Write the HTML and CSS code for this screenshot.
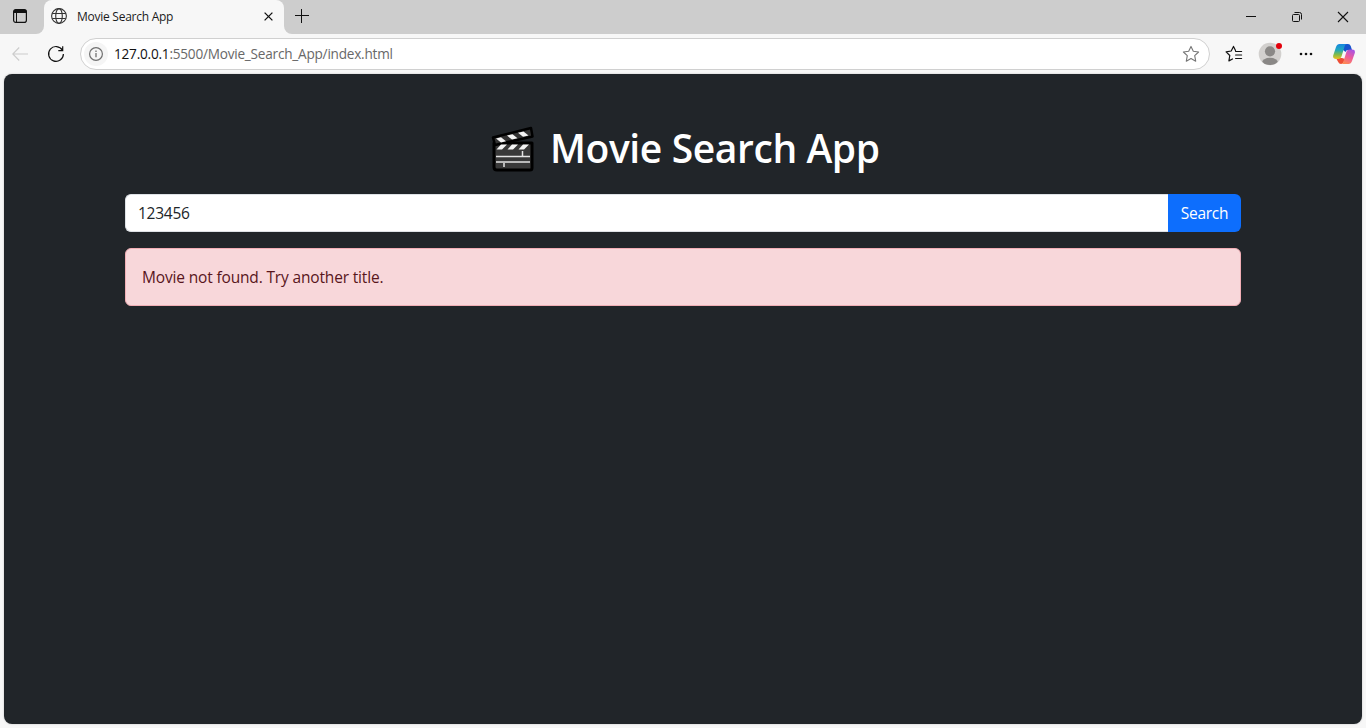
FILE: index.html
```html
<!DOCTYPE html>
<html lang="en">
<head>
<meta charset="utf-8">
<title>Movie Search App</title>
<link rel="stylesheet" href="styles.css">
</head>
<body>
<div class="browser">
  <header class="tabbar">
    <div class="tab-actions">
      <svg width="16" height="16" viewBox="0 0 16 16"><rect x="1.6" y="1.6" width="12.8" height="12.8" rx="2.2" fill="none" stroke="#111" stroke-width="1.2"/><path d="M1.5 5V3.7a2.2 2.2 0 0 1 2.2-2.2h8.6a2.2 2.2 0 0 1 2.2 2.2V5z" fill="#111"/><path d="M4.5 5v9.5" stroke="#111"/></svg>
    </div>
    <div class="tab">
      <svg class="globe" width="16" height="16" viewBox="0 0 16 16" fill="none" stroke="#333" stroke-width="1.1"><circle cx="8" cy="8" r="7.4"/><ellipse cx="8" cy="8" rx="3.3" ry="7.4"/><path d="M1.3 5.5h13.4M1.3 10.5h13.4"/></svg>
      <span class="tab-title">Movie Search App</span>
      <svg class="tab-close" width="9" height="9" viewBox="0 0 9 9"><path d="M.6.6l7.8 7.8M8.4.6L.6 8.4" stroke="#111" stroke-width="1.3"/></svg>
    </div>
    <svg class="new-tab" width="14" height="14" viewBox="0 0 14 14"><path d="M6.500 0v14M0 6.500h14" stroke="#111"/></svg>
    <div class="window-controls">
      <svg width="46" height="34" viewBox="0 0 46 34"><path d="M18 16.5h10" stroke="#111"/></svg>
      <svg width="46" height="34" viewBox="0 0 46 34" fill="none" stroke="#111"><rect x="18.5" y="14.5" width="7" height="7" rx="1"/><path d="M20.5 12.5h5a2 2 0 0 1 2 2v5"/></svg>
      <svg width="46" height="34" viewBox="0 0 46 34"><path d="M18 12l10 10M28 12L18 22" stroke="#111" stroke-width="1.1"/></svg>
    </div>
  </header>
  <div class="toolbar">
    <svg class="back" width="16" height="14" viewBox="0 0 16 14" fill="none" stroke="#ccc" stroke-width="1.1"><path d="M7.2.5L.8 7l6.4 6.5M.8 7H16"/></svg>
    <svg class="reload" width="18" height="18" viewBox="0 0 18 18" fill="none" stroke="#111" stroke-width="1.2"><path d="M15.4 5.2A7.4 7.4 0 1 0 16.4 9M15.7 1.2v4.400h-4.400"/></svg>
    <div class="address">
      <span class="site-info"><svg width="14" height="14" viewBox="0 0 14 14" fill="none" stroke="#707070"><circle cx="7" cy="7" r="6.4" stroke-width="1.2"/><path d="M7 6v4.3M7 3.5v1.4" stroke-width="1.3"/></svg></span>
      <span class="url"><span class="host">127.0.0.1</span>:5500/Movie_Search_App/index.html</span>
      <svg class="favorite" width="18" height="18" viewBox="0 0 18 18" fill="none" stroke="#767676" stroke-width="1.1" stroke-linejoin="round"><path d="M9 1.4l2.3 4.9 5.3.7-3.9 3.7 1 5.5L9 13.6l-4.7 2.6 1-5.5L1.4 7l5.3-.7z"/></svg>
    </div>
    <svg class="favorites" width="18" height="18" viewBox="0 0 18 18" fill="none" stroke="#111" stroke-width="1.2" stroke-linejoin="round" stroke-linecap="round"><path d="M10.500 5.500L8.500 1.400 6.200 6l-5.100.8 3.700 3.700-.9 5.400L7.500 14M10.600 6.500h6M10.600 10h6M10.600 13.500h6"/></svg>
    <svg class="profile" width="26" height="26" viewBox="0 0 26 26"><defs><clipPath id="face"><circle cx="12" cy="14" r="11"/></clipPath></defs><circle cx="12" cy="14" r="11.3" fill="#d2d0ce"/><g clip-path="url(#face)" fill="#8a8886"><circle cx="12" cy="11.3" r="5.1"/><ellipse cx="12" cy="22.5" rx="8" ry="4.7"/></g><circle cx="21" cy="6" r="3" fill="#e3000b"/></svg>
    <svg class="more" width="14" height="4" viewBox="0 0 14 4" fill="#111"><circle cx="2" cy="2" r="1.3"/><circle cx="7" cy="2" r="1.3"/><circle cx="12" cy="2" r="1.3"/></svg>
    <svg class="copilot" width="22" height="20" viewBox="0 0 22 20">
      <defs>
        <linearGradient id="cool" x1="0" y1="0" x2="0" y2="1"><stop offset="0" stop-color="#1686e0"/><stop offset=".4" stop-color="#20a8bd"/><stop offset=".7" stop-color="#80bb4b"/><stop offset="1" stop-color="#edc020"/></linearGradient>
        <linearGradient id="warm" x1=".8" y1="0" x2=".3" y2="1"><stop offset="0" stop-color="#a653e6"/><stop offset=".5" stop-color="#ed5b9b"/><stop offset="1" stop-color="#ff8b52"/></linearGradient>
      </defs>
      <path d="M11 0h4q2 0 2.700 2l1.300 4h-4q-2 0-2.500 2L9 5z" fill="#1754ce"/>
      <path d="M3 14h6l3 1q-1.700 5-4 5-2 0-2.800-2z" fill="#ed4e35"/>
      <path d="M6.5 0H14q-1.700 0-2.300 2L8.500 12.500Q7.800 15 5 15H3q-3.500 0-2.800-3.500L3 3q1-3 3.500-3z" fill="url(#cool)"/>
      <path d="M15.5 20H8q1.700 0 2.300-2l3.200-10.500Q14.200 5.500 17 5.500h2q3.500 0 2.800 3.500L19 17q-1 3-3.500 3z" fill="url(#warm)"/>
    </svg>
  </div>
  <main class="page">
    <div class="container">
      <h1 class="heading">
        <svg class="clapper" width="44" height="46" viewBox="0 0 44 46">
          <path d="M3 17h38v25q0 2-2 2H6q-3 0-3-3z" fill="#393939" stroke="#000" stroke-width="3" stroke-linejoin="round"/>
          <path d="M2 11.500L40 2l1.500 8.500L4 19z" fill="#333" stroke="#000" stroke-width="2.500" stroke-linejoin="round"/>
          <g fill="#f4f4f4"><path d="M5 12.500l5-1.200 5 4-5 1.200zM16 9.600l5.500-1.400 5 4-5.500 1.400zM27 6.800l5.500-1.400 5 4-5.500 1.400zM10 18.500h6l-5 5H5.500zM21 18.500h6l-5 5h-5.500zM32 18.500h6l-5 5h-5.500z"/></g>
          <path d="M5 30.500h34M5 36h34M31.500 25v5M13 37v4" stroke="#e4e4e4" stroke-width="1.500"/>
        </svg>
        <span class="heading-text">Movie Search App</span>
      </h1>
      <form class="search">
        <input class="search-input" type="text" value="123456">
        <button class="search-button" type="button">Search</button>
      </form>
      <div class="alert">Movie not found. Try another title.</div>
    </div>
  </main>
</div>
</body>
</html>
```
FILE: styles.css
```css
* { box-sizing: border-box; }
body { margin: 0; font-family: "Open Sans", "Noto Sans", sans-serif; overflow: hidden; }
svg { display: block; flex: none; }
.browser { display: flex; flex-direction: column; height: 728px; background: #f7f7f7; }
.tabbar { display: flex; height: 34px; background: linear-gradient(#f7f7f7, #f7f7f7) 30px 20px / 264px 14px no-repeat #cdcdcd; }
.tab-actions { width: 44px; padding: 8px 0 0 12px; background: #cdcdcd; border-bottom-right-radius: 8px; }
.tab { display: flex; align-items: center; width: 240px; height: 34px; padding: 0 11px 2px 7px; background: #f7f7f7; border-radius: 8px 8px 0 0; }
.tab-title { margin-left: 10px; font-size: 12px; letter-spacing: -0.26px; color: #1b1b1b; white-space: nowrap; }
.tab-close { margin-left: auto; }
.new-tab { box-sizing: content-box; padding: 9px 0 11px 11px; background: #cdcdcd; border-bottom-left-radius: 8px; }
.window-controls { display: flex; margin-left: auto; }
.toolbar { display: flex; align-items: center; height: 40px; padding: 0 10px 0 12px; }
.reload { margin-left: 19px; }
.address { display: flex; align-items: center; width: 1130px; height: 32px; margin-left: 15px; padding: 0 9px 0 4px; background: #fff; border: 1px solid #d0d0d0; border-radius: 16px; }
.site-info { display: flex; align-items: center; justify-content: center; width: 24px; height: 24px; margin-left: -1px; border-radius: 50%; background: #f5f5f5; }
.url { margin-left: 6px; padding-bottom: 1px; font-size: 13.6px; letter-spacing: -0.22px; color: #686868; white-space: nowrap; }
.host { color: #111; }
.favorite { margin-left: auto; }
.favorites { margin-left: 15px; }
.profile { margin-left: 15px; margin-bottom: 2px; }
.more { margin-left: 15px; }
.copilot { margin-left: 20px; }
.page { height: 650px; margin: 0 4px; background: #212529; border-radius: 8px; box-shadow: 0 0 2px #bbb; }
.container { width: 1140px; margin: 0 auto; padding: 51px 12px 0; }
.heading { display: flex; align-items: center; height: 48px; margin: 0 0 21px; padding-left: 366px; color: #fff; font-size: 39px; font-weight: 600; line-height: 48px; white-space: nowrap; }
.heading-text { margin-left: 15px; padding-bottom: 2px; letter-spacing: -0.4px; }
.search { display: flex; height: 38px; margin: 0 0 16px; }
.search-input { flex: 1; min-width: 0; padding: 0 12px; border: 1px solid #dee2e6; border-right: 0; border-radius: 6px 0 0 6px; background: #fff; color: #212529; font: 15.5px "Open Sans", sans-serif; letter-spacing: -0.25px; outline: 0; }
.search-button { width: 73px; padding: 0; border: 0; border-radius: 0 6px 6px 0; background: #0d6efd; color: #fff; font: 15.5px "Open Sans", sans-serif; letter-spacing: -0.3px; }
.alert { height: 58px; padding: 16px; border: 1px solid #f1aeb5; border-radius: 6px; background: #f8d7da; color: #58151c; font-size: 15.5px; line-height: 24px; letter-spacing: -0.16px; }
```
